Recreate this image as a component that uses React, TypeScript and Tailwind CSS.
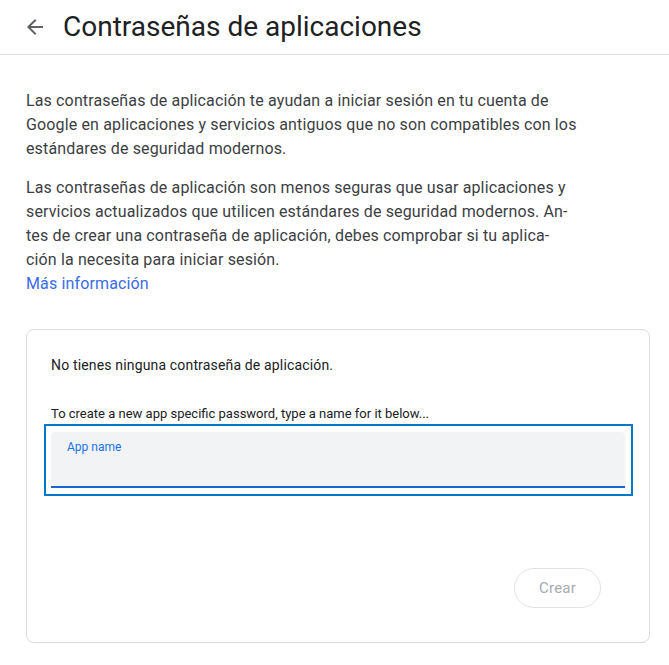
import React from 'react';

const ArrowBack: React.FC = () => (
  <svg width="24" height="24" viewBox="0 0 24 24" className="text-[#5f6368]" fill="currentColor">
    <path d="M20 11H7.83l5.59-5.59L12 4l-8 8 8 8 1.41-1.41L7.83 13H20v-2z" />
  </svg>
);

const App: React.FC = () => {
  const intro = [
    'Las contraseñas de aplicación te ayudan a iniciar sesión en tu cuenta de',
    'Google en aplicaciones y servicios antiguos que no son compatibles con los',
    'estándares de seguridad modernos.',
  ];
  const warning = [
    'Las contraseñas de aplicación son menos seguras que usar aplicaciones y',
    'servicios actualizados que utilicen estándares de seguridad modernos. An-',
    'tes de crear una contraseña de aplicación, debes comprobar si tu aplica-',
    'ción la necesita para iniciar sesión.',
  ];

  return (
    <div className="min-h-screen bg-white font-['Roboto',sans-serif] text-[#3c4043]">
      {/* Header */}
      <div className="flex items-center h-[55px] pl-[23px] border-b border-[#dadce0]">
        <ArrowBack />
        <h1 className="ml-4 text-[28px] leading-9 text-[#202124]">Contraseñas de aplicaciones</h1>
      </div>

      <div className="pl-[26px] pr-[19px] pt-[34px]">
        <div className="text-base leading-6 tracking-[0.14px]">
          {intro.map(line => (
            <div key={line} className="whitespace-nowrap">{line}</div>
          ))}
        </div>
        <div className="text-base leading-6 tracking-[0.14px] mt-[15px]">
          {warning.map(line => (
            <div key={line} className="whitespace-nowrap">{line}</div>
          ))}
          <a href="#" className="block text-[#3b6ce8]">Más información</a>
        </div>

        {/* Card */}
        <div className="mt-[33px] border border-[#dadce0] rounded-lg px-6 pt-[25px] pb-[34px]">
          <p className="text-sm leading-5 tracking-[0.16px] text-[#202124]">No tienes ninguna contraseña de aplicación.</p>

          <p className="mt-[31px] text-[13px] leading-4 text-[#202124]">
            To create a new app specific password, type a name for it below...
          </p>

          {/* focused field */}
          <div className="mt-[2px] -ml-[7px] -mr-[8px] border-2 border-[#0078c8] pl-[5px] pr-[6px] py-[6px]">
            <div className="h-14 bg-[#f1f3f4] rounded-t border-b-2 border-[#1967d2] px-4 pt-[7px]">
              <span className="block text-xs leading-4 text-[#1a73e8]">App name</span>
            </div>
          </div>

          <div className="flex justify-end mt-[72px] pr-6">
            <button className="h-10 w-[87px] rounded-full border border-[#e3e3e3] text-[15px] tracking-[0.2px] text-[#a8abb0]">
              Crear
            </button>
          </div>
        </div>
      </div>
    </div>
  );
};

export default App;
